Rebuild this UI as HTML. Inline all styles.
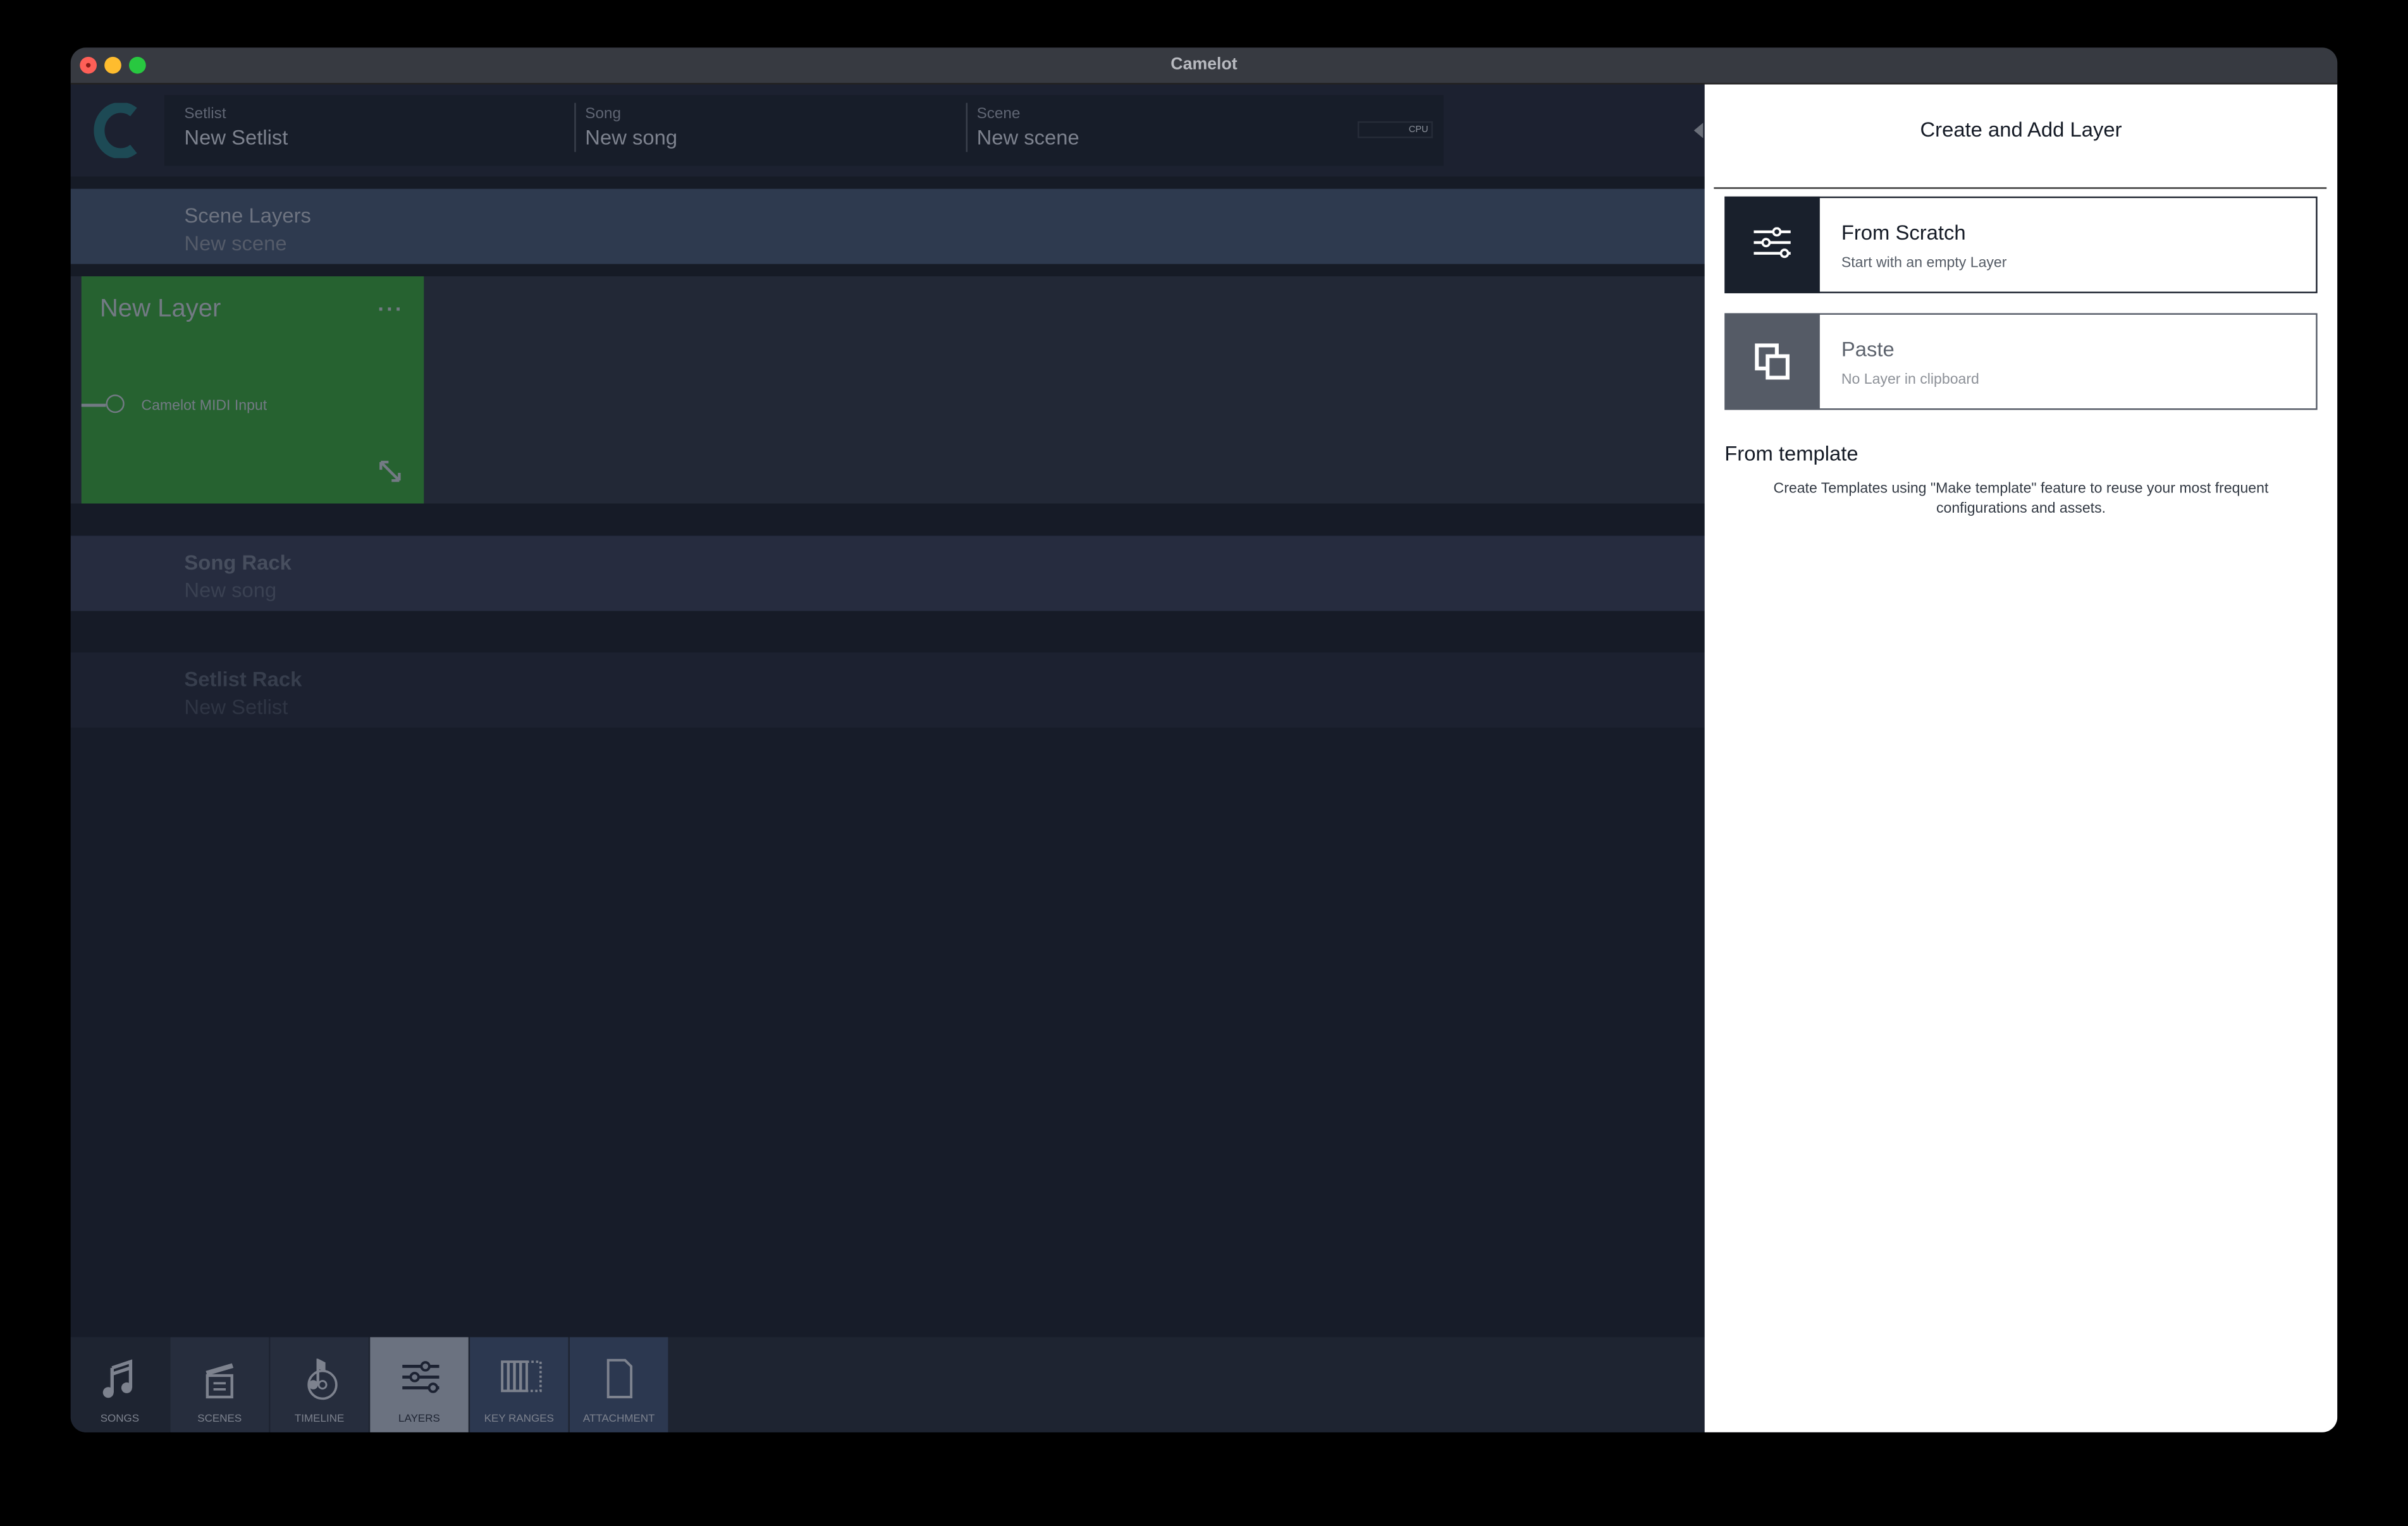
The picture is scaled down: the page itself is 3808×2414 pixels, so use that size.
<!DOCTYPE html>
<html><head><meta charset="utf-8"><style>
html,body{margin:0;padding:0;background:#000;width:3808px;height:2414px;overflow:hidden}
#s{position:absolute;left:0;top:0;width:1568px;height:994px;transform:scale(2.428571);transform-origin:0 0;font-family:"Liberation Sans",sans-serif}
.a{position:absolute}
.win{left:46px;top:31px;width:1476px;height:902px;border-radius:10px;overflow:hidden;background:#1a1f2c}
.lbl{color:#5f6573;font-size:10px}
.val{color:#7d828e;font-size:13.5px}
.tab{position:absolute;top:0;width:64px;height:62px;text-align:center}
.tab span{position:absolute;left:0;right:0;bottom:5px;font-size:7px;color:#7d828e}
.tab svg{position:absolute;left:20px;top:14px}
</style></head><body><div id="s">
<div class="a win">
 <div class="a" style="left:0;top:0;width:1476px;height:23px;background:#373a41;border-bottom:1px solid #222"></div>
 <div class="a" style="left:6px;top:6px;width:11px;height:11px;border-radius:50%;background:#fe5f57"></div>
 <div class="a" style="left:10px;top:10px;width:3px;height:3px;border-radius:50%;background:#8a1c17"></div>
 <div class="a" style="left:22px;top:6px;width:11px;height:11px;border-radius:50%;background:#febc2e"></div>
 <div class="a" style="left:38px;top:6px;width:11px;height:11px;border-radius:50%;background:#28c840"></div>
 <div class="a" style="left:0;top:5px;width:1476px;text-align:center;color:#b8bac0;font-size:11px;font-weight:bold">Camelot</div>
 <div class="a" style="left:0;top:24px;width:1064px;height:60px;background:#1c2130"></div>
 <div class="a" style="left:0;top:84px;width:1064px;height:8px;background:#161b26"></div>
 <svg class="a" style="left:15px;top:36px" width="32" height="36" viewBox="0 0 32 36"><path d="M26 6 A14 15 0 1 0 26 30" fill="none" stroke="#1d4a55" stroke-width="7"/></svg>
 <div class="a" style="left:61px;top:31px;width:833px;height:46px;background:#171d29"></div>
 <div class="a lbl" style="left:74px;top:38px">Setlist</div>
 <div class="a val" style="left:74px;top:51px">New Setlist</div>
 <div class="a" style="left:328px;top:36px;width:1px;height:32px;background:#3a404c"></div>
 <div class="a lbl" style="left:335px;top:38px">Song</div>
 <div class="a val" style="left:335px;top:51px">New song</div>
 <div class="a" style="left:583px;top:36px;width:1px;height:32px;background:#3a404c"></div>
 <div class="a lbl" style="left:590px;top:38px">Scene</div>
 <div class="a val" style="left:590px;top:51px">New scene</div>
 <div class="a" style="left:838px;top:48px;width:49px;height:11px;border:1px solid #262c38;font-size:6px;color:#8a8f99;text-align:right;line-height:11px;padding-right:2px;box-sizing:border-box">CPU</div>
 <div class="a" style="left:1057px;top:49px;width:0;height:0;border-top:5px solid transparent;border-bottom:5px solid transparent;border-right:6px solid #6b707a"></div>
 <div class="a" style="left:0;top:92px;width:1064px;height:49px;background:#2e3a4f"></div>
 <div class="a" style="left:74px;top:102px;color:#6d7380;font-size:13.5px">Scene Layers</div>
 <div class="a" style="left:74px;top:120px;color:#545b69;font-size:13.5px">New scene</div>
 <div class="a" style="left:0;top:141px;width:1064px;height:8px;background:#161b26"></div>
 <div class="a" style="left:0;top:149px;width:1064px;height:148px;background:#222836"></div>
 <div class="a" style="left:7px;top:149px;width:223px;height:148px;background:#266230"></div>
 <div class="a" style="left:19px;top:161px;color:#737a84;font-size:16.5px">New Layer</div>
 <div class="a" style="left:200px;top:162px;color:#737a84;font-size:14px;font-weight:bold;letter-spacing:1px">···</div>
 <div class="a" style="left:7px;top:232px;width:16px;height:1.5px;background:#737a84"></div>
 <div class="a" style="left:23px;top:226px;width:10px;height:10px;border:1.5px solid #737a84;border-radius:50%"></div>
 <div class="a" style="left:46px;top:228px;color:#737a84;font-size:9.5px">Camelot MIDI Input</div>
 <svg class="a" style="left:200px;top:268px" width="16" height="16" viewBox="0 0 16 16"><path d="M2 2L14 14M2 2h5M2 2v5M14 14h-5M14 14v-5" stroke="#737a84" stroke-width="1.8" fill="none"/></svg>
 <div class="a" style="left:0;top:297px;width:1064px;height:21px;background:#161b27"></div>
 <div class="a" style="left:0;top:318px;width:1064px;height:49px;background:#262c3f"></div>
 <div class="a" style="left:74px;top:328px;color:#474e5e;font-size:13.5px;font-weight:bold">Song Rack</div>
 <div class="a" style="left:74px;top:346px;color:#3a4152;font-size:13.5px">New song</div>
 <div class="a" style="left:0;top:367px;width:1064px;height:27px;background:#161b27"></div>
 <div class="a" style="left:0;top:394px;width:1064px;height:49px;background:#1c2130"></div>
 <div class="a" style="left:74px;top:404px;color:#373e4d;font-size:13.5px;font-weight:bold">Setlist Rack</div>
 <div class="a" style="left:74px;top:422px;color:#2f3544;font-size:13.5px">New Setlist</div>
 <div class="a" style="left:0;top:443px;width:1064px;height:397px;background:#171c29"></div>
 <div class="a" style="left:0;top:840px;width:1064px;height:62px;background:#1e2431">
  <div class="tab" style="left:0;background:#1e2431"><svg width="24" height="26" viewBox="0 0 24 26"><path d="M7 6L19 2V19M7 6V22M7 10L19 6" stroke="#7d828e" stroke-width="2.2" fill="none"/><circle cx="4.5" cy="22" r="3.5" fill="#7d828e"/><circle cx="16.5" cy="19" r="3.5" fill="#7d828e"/></svg><span>SONGS</span></div>
  <div class="tab" style="left:65px;background:#262d3d"><svg width="24" height="26" viewBox="0 0 24 26"><path d="M3 8L20 3L21 6L4 11Z" fill="#7d828e"/><rect x="4" y="11" width="16" height="14" fill="none" stroke="#7d828e" stroke-width="1.8"/><path d="M8 16h8M8 20h8" stroke="#7d828e" stroke-width="1.5"/></svg><span>SCENES</span></div>
  <div class="tab" style="left:130px;background:#262d3d"><svg width="26" height="28" viewBox="0 0 26 28"><circle cx="14" cy="17" r="9" fill="none" stroke="#7d828e" stroke-width="1.5"/><circle cx="14" cy="17" r="2.5" fill="none" stroke="#7d828e" stroke-width="1.2"/><path d="M11 17V1L15 3V7L12 6" stroke="#7d828e" stroke-width="1.8" fill="#7d828e"/><circle cx="8" cy="17" r="3" fill="#7d828e"/></svg><span>TIMELINE</span></div>
  <div class="tab" style="left:195px;background:#6b7280"><svg width="26" height="26" viewBox="0 0 26 26"><path d="M1 5h24M1 12h24M1 19h24" stroke="#1c2232" stroke-width="2"/><circle cx="16" cy="5" r="2.6" fill="#6b7280" stroke="#1c2232" stroke-width="1.6"/><circle cx="9" cy="12" r="2.6" fill="#6b7280" stroke="#1c2232" stroke-width="1.6"/><circle cx="21" cy="19" r="2.6" fill="#6b7280" stroke="#1c2232" stroke-width="1.6"/></svg><span style="color:#1e2432">LAYERS</span></div>
  <div class="tab" style="left:260px;background:#2c3850"><svg width="28" height="24" viewBox="0 0 28 24"><rect x="1" y="2" width="16" height="19" fill="none" stroke="#7d828e" stroke-width="1.6"/><path d="M5 2v13M9 2v13M13 2v13M5 15v6M9 15v6M13 15v6" stroke="#7d828e" stroke-width="1.8"/><path d="M17 2h9v19h-9" stroke="#7d828e" stroke-width="1.5" stroke-dasharray="1.5 1.5" fill="none"/></svg><span>KEY RANGES</span></div>
  <div class="tab" style="left:325px;background:#2c3850"><svg width="26" height="26" viewBox="0 0 26 26"><path d="M5 1h11l4 4v20H5Z" fill="none" stroke="#7d828e" stroke-width="1.6"/></svg><span>ATTACHMENT</span></div>
 </div>
 <div class="a" style="left:1064px;top:24px;width:412px;height:878px;background:#fff"></div>
 <div class="a" style="left:1064px;top:46px;width:412px;text-align:center;font-size:13.5px;color:#151b26">Create and Add Layer</div>
 <div class="a" style="left:1070px;top:91px;width:399px;height:1px;background:#333"></div>
 <div class="a" style="left:1077px;top:97px;width:384px;height:61px;border:1px solid #1a202c"></div>
 <div class="a" style="left:1077px;top:97px;width:62px;height:63px;background:#19202c"></div>
 <svg class="a" style="left:1095px;top:117px" width="26" height="24" viewBox="0 0 26 24"><path d="M1 3h24M1 10h24M1 17h24" stroke="#fff" stroke-width="1.8"/><circle cx="16" cy="3" r="2.3" fill="#19202c" stroke="#fff" stroke-width="1.5"/><circle cx="9" cy="10" r="2.3" fill="#19202c" stroke="#fff" stroke-width="1.5"/><circle cx="21" cy="17" r="2.3" fill="#19202c" stroke="#fff" stroke-width="1.5"/></svg>
 <div class="a" style="left:1153px;top:113px;font-size:13.5px;color:#151b26">From Scratch</div>
 <div class="a" style="left:1153px;top:135px;font-size:9.5px;color:#555c66">Start with an empty Layer</div>
 <div class="a" style="left:1077px;top:173px;width:384px;height:61px;border:1px solid #555b66"></div>
 <div class="a" style="left:1077px;top:173px;width:62px;height:63px;background:#555b66"></div>
 <svg class="a" style="left:1096px;top:192px" width="26" height="26" viewBox="0 0 26 26"><rect x="2" y="2" width="13" height="15" fill="none" stroke="#fff" stroke-width="2.5"/><rect x="9" y="9" width="13" height="14" fill="#555b66" stroke="#fff" stroke-width="2.5"/></svg>
 <div class="a" style="left:1153px;top:189px;font-size:13.5px;color:#5d636d">Paste</div>
 <div class="a" style="left:1153px;top:211px;font-size:9.5px;color:#8d9198">No Layer in clipboard</div>
 <div class="a" style="left:1077px;top:257px;font-size:13.5px;color:#151b26">From template</div>
 <div class="a" style="left:1064px;top:281px;width:412px;text-align:center;font-size:9.5px;line-height:13px;color:#333a44">Create Templates using "Make template" feature to reuse your most frequent<br>configurations and assets.</div>
</div>
</div></body></html>
